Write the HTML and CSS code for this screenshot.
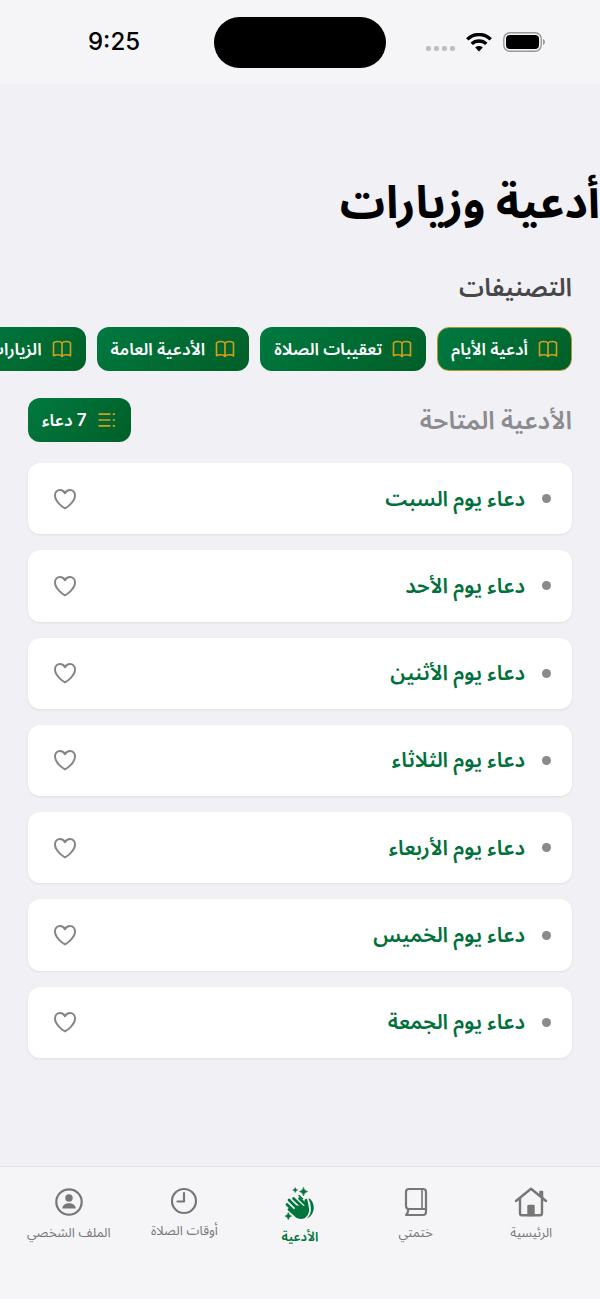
FILE: index.html
```html
<!DOCTYPE html>
<html lang="ar" dir="rtl">
<head>
<meta charset="utf-8">
<meta name="viewport" content="width=device-width, initial-scale=1">
<title>أدعية وزيارات</title>
<link rel="stylesheet" href="styles.css">
</head>
<body>
<svg class="sprite" aria-hidden="true">
  <symbol id="book" viewBox="0 0 20 20"><path d="M10 4.200Q9 2.500 5.800 2.500Q3.200 2.500 1.500 3.800V16.800Q3.200 15.800 5.800 15.800Q9 15.800 10 17.500Q11 15.800 14.200 15.800Q16.800 15.800 18.500 16.800V3.800Q16.800 2.500 14.200 2.500Q11 2.500 10 4.200ZM10 4.200V17.500" fill="none" stroke="currentColor" stroke-width="1.600" stroke-linejoin="round"/></symbol>
  <symbol id="heart" viewBox="0 0 24 22"><path d="M12 20.400C10.500 19.700 2 14 2 7.600C2 4.200 4.300 2 7 2C9.300 2 11.100 3.300 12 5.200C12.900 3.300 14.700 2 17 2C19.700 2 22 4.200 22 7.600C22 14 13.500 19.700 12 20.400Z" fill="none" stroke="currentColor" stroke-width="2" stroke-linejoin="round"/></symbol>
</svg>

<header class="status" dir="ltr">
  <time class="status-time">9:25</time>
  <span class="island"></span>
  <span class="status-icons">
    <span class="signal"><i></i><i></i><i></i><i></i></span>
    <svg class="wifi" viewBox="0 0 26 19" aria-hidden="true">
      <path d="M1.300 6.400A16.500 16.500 0 0 1 24.700 6.400" fill="none" stroke="#000" stroke-width="3.400"/>
      <path d="M5.700 10.900A10.500 10.500 0 0 1 20.300 10.900" fill="none" stroke="#000" stroke-width="3.400"/>
      <path d="M9.200 14.500A5.600 5.600 0 0 1 16.800 14.500L13 18.500Z"/>
    </svg>
    <svg class="battery" viewBox="0 0 43 20" aria-hidden="true">
      <rect x="0.800" y="0.800" width="37.400" height="18.400" rx="6" fill="none" stroke="#98989a" stroke-width="1.400"/>
      <rect x="3" y="3" width="33" height="14" rx="4"/>
      <path d="M40 7C42.600 7.800 42.600 12.200 40 13Z" fill="#98989a"/>
    </svg>
  </span>
</header>

<main class="content">
  <h1 class="title">أدعية وزيارات</h1>
  <h2 class="heading">التصنيفات</h2>
  <div class="chips">
    <button class="chip chip-active" type="button"><svg class="chip-icon" aria-hidden="true"><use href="#book"/></svg>أدعية الأيام</button>
    <button class="chip" type="button"><svg class="chip-icon" aria-hidden="true"><use href="#book"/></svg>تعقيبات الصلاة</button>
    <button class="chip" type="button"><svg class="chip-icon" aria-hidden="true"><use href="#book"/></svg>الأدعية العامة</button>
    <button class="chip" type="button"><svg class="chip-icon" aria-hidden="true"><use href="#book"/></svg>الزيارات</button>
  </div>
  <div class="available">
    <h2 class="heading heading-muted">الأدعية المتاحة</h2>
    <span class="chip">
      <svg class="chip-icon" viewBox="0 0 20 20" aria-hidden="true"><path d="M1.500 4.200H13.500M1.500 10H13.500M1.500 15.800H13.500M15.800 4.200H18M15.800 10H18M15.800 15.800H18" fill="none" stroke="currentColor" stroke-width="1.700"/></svg>
      <span>7 دعاء</span>
    </span>
  </div>
  <ul class="list">
    <li class="card"><a class="card-link" href="#sat">دعاء يوم السبت</a><button class="like" type="button" aria-label="المفضلة"><svg class="heart" aria-hidden="true"><use href="#heart"/></svg></button></li>
    <li class="card"><a class="card-link" href="#sun">دعاء يوم الأحد</a><button class="like" type="button" aria-label="المفضلة"><svg class="heart" aria-hidden="true"><use href="#heart"/></svg></button></li>
    <li class="card"><a class="card-link" href="#mon">دعاء يوم الأثنين</a><button class="like" type="button" aria-label="المفضلة"><svg class="heart" aria-hidden="true"><use href="#heart"/></svg></button></li>
    <li class="card"><a class="card-link" href="#tue">دعاء يوم الثلاثاء</a><button class="like" type="button" aria-label="المفضلة"><svg class="heart" aria-hidden="true"><use href="#heart"/></svg></button></li>
    <li class="card"><a class="card-link" href="#wed">دعاء يوم الأربعاء</a><button class="like" type="button" aria-label="المفضلة"><svg class="heart" aria-hidden="true"><use href="#heart"/></svg></button></li>
    <li class="card"><a class="card-link" href="#thu">دعاء يوم الخميس</a><button class="like" type="button" aria-label="المفضلة"><svg class="heart" aria-hidden="true"><use href="#heart"/></svg></button></li>
    <li class="card"><a class="card-link" href="#fri">دعاء يوم الجمعة</a><button class="like" type="button" aria-label="المفضلة"><svg class="heart" aria-hidden="true"><use href="#heart"/></svg></button></li>
  </ul>
</main>

<nav class="tabs">
  <a class="tab" href="#home">
    <svg width="34" height="30" viewBox="0 0 34 30" fill="none" stroke="currentColor" stroke-width="2.400" stroke-linecap="round" stroke-linejoin="round" aria-hidden="true"><path d="M2 14L17 1.700L32 14M6 11V26Q6 28.300 8 28.300H26Q28 28.300 28 26V11"/><path d="M26 4.500H28.500V10.500L26 8.500Z" fill="currentColor" stroke-width="1.500"/><path d="M14.500 28V19H19.500V28Z" fill="currentColor"/></svg>
    <span>الرئيسية</span>
  </a>
  <a class="tab" href="#khatma">
    <svg width="24" height="30" viewBox="0 0 24 30" fill="none" stroke="currentColor" stroke-width="2.200" stroke-linecap="round" stroke-linejoin="round" aria-hidden="true"><path d="M22 22V5Q22 2 19 2H5Q2 2 2 5V19Q2 22 5 22H22V25Q22 28 19 28H2Q4.500 26 4 22"/><path d="M18 2V22" stroke-width="1.600"/></svg>
    <span>ختمتي</span>
  </a>
  <a class="tab tab-active" href="#duas" aria-current="page">
    <svg width="30" height="34" viewBox="0 0 30 34" aria-hidden="true" fill="currentColor">
      <path d="M10.200 .500Q10.600 2.600 12.700 3Q10.600 3.400 10.200 5.500Q9.800 3.400 7.700 3Q9.800 2.600 10.200 .500ZM18.500 .300Q19.200 4 22.800 4.600Q19.200 5.200 18.500 9Q17.800 5.200 14.300 4.600Q17.800 4 18.500 .300ZM3.300 25.500Q3.900 28.600 6.700 29.100Q3.900 29.600 3.300 32.700Q2.700 29.600 0 29.100Q2.700 28.600 3.300 25.500Z" stroke="currentColor" stroke-width="0.500"/>
      <path d="M8.500 11.500L18 20.500M4 13L14 23M2 17.500L12 27M4 22.500L12 29.500M14.500 11.500L20 17" fill="none" stroke="currentColor" stroke-width="2.700" stroke-linecap="round"/>
      <path d="M11 18.500L19.500 19L19.500 13Q21.800 10.500 22.500 13.500L24 21C25 27 21 32 16 32C12 32 9.500 29 7.500 26Z"/>
      <path d="M24.200 11.200Q28.500 14 28.800 21Q28.500 28.500 21.800 31.500Q26.500 27 25.800 20.500Q25.500 15 23.500 12Z"/>
      <path d="M14 8.500L17.500 11.800" stroke="currentColor" stroke-width="1.500" stroke-linecap="round"/>
    </svg>
    <span>الأدعية</span>
  </a>
  <a class="tab" href="#times">
    <svg width="28" height="28" viewBox="0 0 28 28" fill="none" stroke="currentColor" stroke-width="2.200" stroke-linecap="round" stroke-linejoin="round" aria-hidden="true"><circle cx="14" cy="14" r="12"/><path d="M14 6V14.500H7.500"/></svg>
    <span>أوقات الصلاة</span>
  </a>
  <a class="tab" href="#profile">
    <svg width="30" height="30" viewBox="0 0 30 30" fill="currentColor" aria-hidden="true"><circle cx="15" cy="15" r="12.700" fill="none" stroke="currentColor" stroke-width="2.200"/><circle cx="15" cy="11" r="3.700"/><path d="M8.300 21.500C8.300 14.500 21.700 14.500 21.700 21.500Z"/></svg>
    <span>الملف الشخصي</span>
  </a>
</nav>
</body>
</html>
```
FILE: styles.css
```css
* { box-sizing: border-box; }

body {
  margin: 0;
  min-height: 100vh;
  display: flex;
  flex-direction: column;
  overflow-x: hidden;
  background: #f0f0f5;
  color: #000;
  font-family: Inter, "Noto Sans Arabic", "Noto Sans", "DejaVu Sans", sans-serif;
}

.sprite { display: none; }

.status {
  display: grid;
  grid-template-columns: 1fr 172px 1fr;
  align-items: center;
  height: 84px;
  background: #f5f5f7;
}

.status-time {
  padding-left: 14px;
  text-align: center;
  font-size: 24px;
  line-height: 28px;
  font-weight: 500;
}

.island {
  height: 51px;
  border-radius: 26px;
  background: #000;
}

.status-icons {
  display: flex;
  align-items: center;
  gap: 11px;
  padding-left: 40px;
}

.signal {
  display: flex;
  gap: 3px;
  padding-top: 12px;
}

.signal i {
  width: 5px;
  height: 5px;
  border-radius: 2px;
  background: #bdbdbf;
}

.wifi { width: 26px; height: 19px; }
.battery { width: 43px; height: 20px; }

.content { flex: 1; }

.title {
  margin: 84px 0 0;
  font-size: 45px;
  line-height: 68px;
  font-weight: 700;
}

.heading {
  margin: 0;
  font-size: 25px;
  line-height: 34px;
  font-weight: 600;
  color: #47474a;
}

.title + .heading { margin: 34px 28px 0; }
.heading-muted { color: #8c8c90; }

.chips {
  display: flex;
  gap: 11px;
  margin-top: 23px;
  padding: 0 28px;
  overflow: hidden;
}

.chip {
  display: flex;
  flex: none;
  align-items: center;
  gap: 10px;
  height: 44px;
  padding: 0 13px;
  border: 1px solid transparent;
  border-radius: 12px;
  background: linear-gradient(135deg, #007940, #005f27) border-box;
  color: #fff;
  font-family: inherit;
  font-size: 17px;
  line-height: 24px;
  font-weight: 600;
}

.chip-active { border-color: #b5962b; }

.chip-icon {
  flex: none;
  width: 20px;
  height: 20px;
  color: #d2a01f;
}

.available {
  display: flex;
  align-items: center;
  justify-content: space-between;
  margin-top: 27px;
  padding: 0 28px;
}

.list {
  display: grid;
  grid-auto-rows: 1fr;
  gap: 16px;
  min-height: 595px;
  margin: 21px 28px 0;
  padding: 0;
  list-style: none;
}

.card {
  display: flex;
  align-items: center;
  justify-content: space-between;
  padding: 0 21px;
  border-radius: 12px;
  background: #fff;
  box-shadow: 0 1px 3px rgba(0, 0, 0, 0.08);
}

.card-link {
  display: flex;
  align-items: center;
  gap: 17px;
  color: #00703c;
  font-size: 21px;
  line-height: 32px;
  font-weight: 600;
  text-decoration: none;
}

.card-link::before {
  content: "";
  width: 9px;
  height: 9px;
  border-radius: 50%;
  background: #8a8a8a;
}

.like {
  display: flex;
  padding: 4px;
  border: 0;
  background: none;
  color: #858585;
}

.heart { width: 24px; height: 22px; }

.tabs {
  display: grid;
  grid-template-columns: repeat(5, 1fr);
  min-height: 133px;
  padding: 20px 11px 0;
  border-top: 1px solid #e2e2e5;
  background: #f5f5f7;
}

.tab {
  display: flex;
  flex-direction: column;
  align-items: center;
  gap: 5px;
  color: #777;
  font-size: 13px;
  line-height: 20px;
  text-decoration: none;
  white-space: nowrap;
}

.tab-active { color: #00763d; font-weight: 600; }
```
